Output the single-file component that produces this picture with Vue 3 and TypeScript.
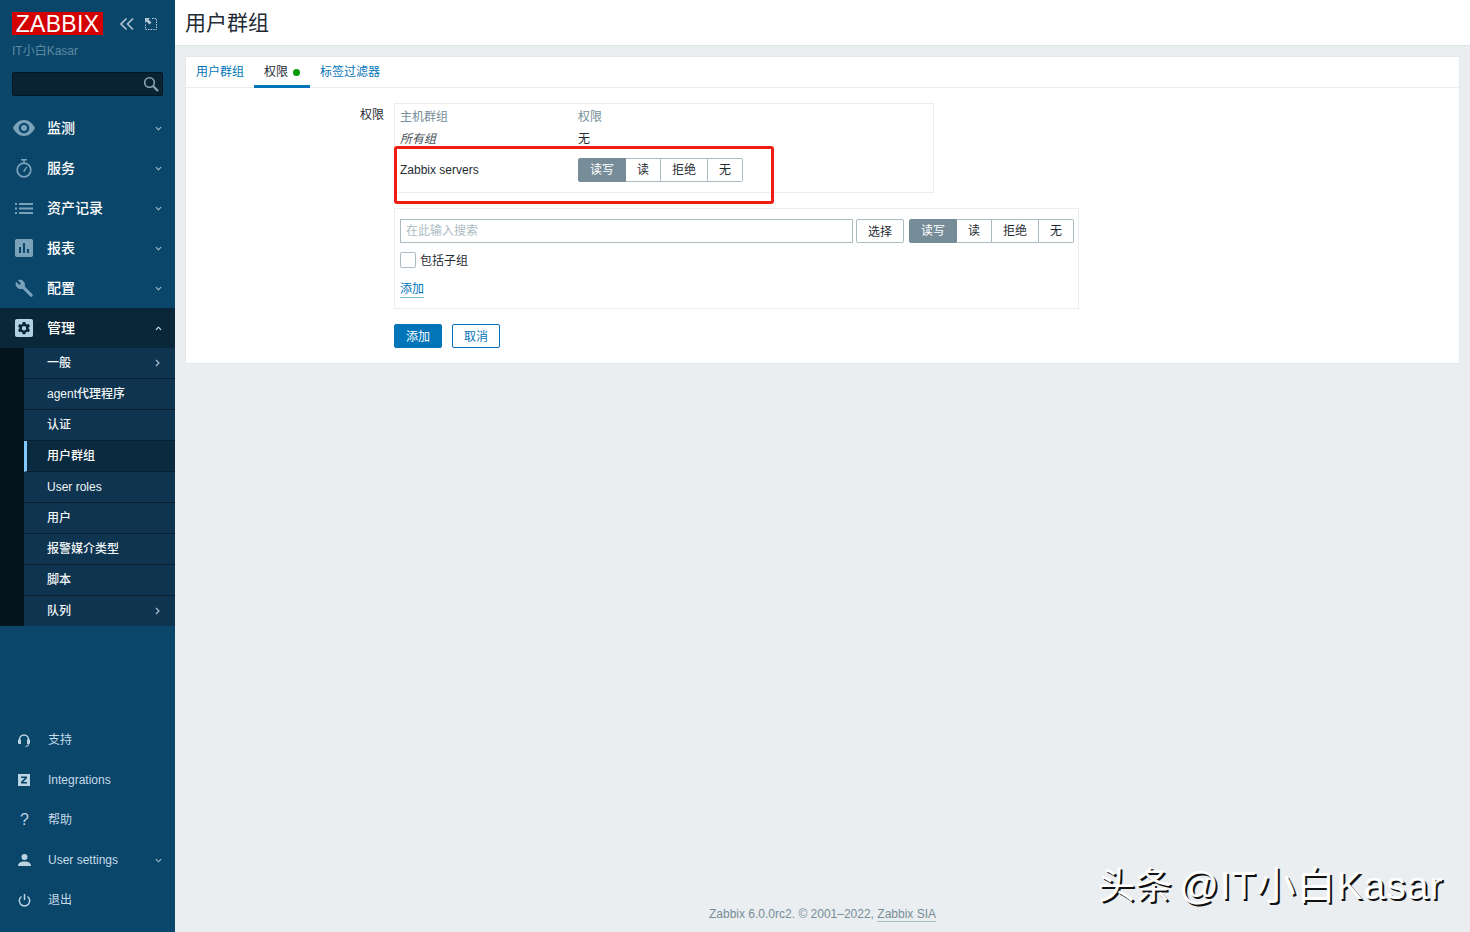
<script setup lang="ts">
interface NavItem { label: string; icon: string; open?: boolean }
const mainNav: NavItem[] = [
  { label: '监测', icon: 'eye' },
  { label: '服务', icon: 'timer' },
  { label: '资产记录', icon: 'list' },
  { label: '报表', icon: 'chart' },
  { label: '配置', icon: 'wrench' }
]
const subNav = [
  { label: '一般', arrow: true },
  { label: 'agent代理程序' },
  { label: '认证' },
  { label: '用户群组', active: true },
  { label: 'User roles' },
  { label: '用户' },
  { label: '报警媒介类型' },
  { label: '脚本' },
  { label: '队列', arrow: true }
]
const bottomNav = [
  { label: '支持', icon: 'headset' },
  { label: 'Integrations', icon: 'z' },
  { label: '帮助', icon: 'help' },
  { label: 'User settings', icon: 'user', more: true },
  { label: '退出', icon: 'power' }
]
const perms = [
  { label: '读写', w: 48, on: true },
  { label: '读', w: 35 },
  { label: '拒绝', w: 47 },
  { label: '无', w: 35 }
]
</script>

<template>
  <div class="page">
    <aside class="side">
      <div class="brand">
        <div class="logo">ZABBIX</div>
        <svg class="tool-collapse" width="16" height="14" viewBox="0 0 16 14"><path d="M7.5 1.5 2 7l5.5 5.5M14 1.5 8.5 7l5.5 5.500" fill="none" stroke="#b4c7d3" stroke-width="1.6"/></svg>
        <svg class="tool-kiosk" width="12" height="12" viewBox="0 0 12 12"><path d="M.5 6.500v5h11V.5H6.500" fill="none" stroke="#b4c7d3" stroke-dasharray="1.500 1"/><path d="M0 0h5L3.500 1.500 6.500 4.500 4.500 6.500 1.500 3.500 0 5z" fill="#b4c7d3"/></svg>
      </div>
      <div class="server">IT小白Kasar</div>
      <div class="search">
        <svg width="16" height="16" viewBox="0 0 16 16"><circle cx="6.500" cy="6.500" r="4.800" fill="none" stroke="#88a5b6" stroke-width="1.600"/><path d="m10 10 5 5" stroke="#88a5b6" stroke-width="2.200"/></svg>
      </div>

      <nav class="nav">
        <a v-for="n in mainNav" :key="n.label" class="nav-item">
          <span class="ico" :class="'ico-' + n.icon">
            <svg v-if="n.icon === 'eye'" width="22" height="16" viewBox="0 0 22 16"><path fill-rule="evenodd" d="M11 0c4.800 0 8.800 3.400 11 8-2.200 4.600-6.200 8-11 8S2.200 12.600 0 8c2.200-4.600 6.200-8 11-8zm0 2.700a5.300 5.300 0 1 0 0 10.600 5.300 5.300 0 0 0 0-10.600zm0 2.300a3 3 0 1 1 0 6 3 3 0 0 1 0-6z" fill="#7aa3bb"/></svg>
            <svg v-else-if="n.icon === 'timer'" width="16" height="19" viewBox="0 0 16 19"><path d="M5 .7h6M8 .7v3" stroke="#7aa3bb" stroke-width="1.600"/><circle cx="8" cy="11" r="6.800" fill="none" stroke="#7aa3bb" stroke-width="1.700"/><path d="M7 12l3.500-4.500.8.6L8.500 13z" fill="#7aa3bb"/></svg>
            <svg v-else-if="n.icon === 'list'" width="18" height="11" viewBox="0 0 18 11"><path d="M0 0h2v2H0zM4 0h14v2H4zM0 4.500h2v2H0zM4 4.500h14v2H4zM0 9h2v2H0zM4 9h14v2H4z" fill="#7aa3bb"/></svg>
            <svg v-else-if="n.icon === 'chart'" width="18" height="18" viewBox="0 0 18 18"><rect width="18" height="18" rx="2" fill="#7aa3bb"/><path d="M4 8h2v6H4zM8 4h2v10H8zM12 10h2v4h-2z" fill="#0a466a"/></svg>
            <svg v-else width="18" height="18" viewBox="0 0 18 18"><path d="M17.400 15.300 9.700 7.600c.6-1.800.2-3.900-1.300-5.400C6.800.6 4.500.3 2.700 1.100L6 4.400 4.400 6 1 2.700C.2 4.500.6 6.800 2.200 8.400c1.500 1.500 3.600 1.900 5.400 1.300l7.700 7.700c.6.600 1.500.6 2 0 .6-.6.600-1.500.1-2.100z" fill="#7aa3bb"/></svg>
          </span>
          <span class="nav-label">{{ n.label }}</span>
          <svg class="chev" width="7" height="5" viewBox="0 0 8 5"><path d="m1 1 3 3 3-3" fill="none" stroke="#a9c2d1" stroke-width="1.200"/></svg>
        </a>

        <a class="nav-item nav-open">
          <span class="ico">
            <svg width="18" height="18" viewBox="0 0 18 18"><rect width="18" height="18" rx="2" fill="#b2d0e4"/><path fill-rule="evenodd" d="m7.700 3 2.600 0 .4 1.800 1.300.7 1.700-.6 1.300 2.200-1.300 1.300v1.400l1.300 1.300-1.300 2.200-1.700-.6-1.300.7-.4 1.800H7.700l-.4-1.800-1.300-.7-1.700.6-1.300-2.200 1.300-1.300V8.600L3 7.300l1.300-2.200 1.700.6 1.300-.7zM9 7a2.200 2.200 0 1 0 0 4.400A2.200 2.200 0 0 0 9 7z" fill="#0a2739"/></svg>
          </span>
          <span class="nav-label">管理</span>
          <svg class="chev" width="7" height="5" viewBox="0 0 8 5"><path d="m1 4 3-3 3 3" fill="none" stroke="#e3edf3" stroke-width="1.200"/></svg>
        </a>

        <ul class="sub">
          <li v-for="s in subNav" :key="s.label" :class="{ active: s.active }">
            <span>{{ s.label }}</span>
            <svg v-if="s.arrow" class="chev-r" width="5" height="8" viewBox="0 0 5 8"><path d="m1 1 3 3-3 3" fill="none" stroke="#a9c2d1" stroke-width="1.200"/></svg>
          </li>
        </ul>
      </nav>

      <nav class="bottom">
        <a v-for="b in bottomNav" :key="b.label" class="bottom-item">
          <span class="bico">
            <svg v-if="b.icon === 'headset'" width="12" height="13" viewBox="0 0 12 13"><path d="M1.500 7V5.500a4.500 4.500 0 0 1 9 0V7" fill="none" stroke="#bcd3e2" stroke-width="1.500"/><path d="M0 5.500h3v4.500H1a1 1 0 0 1-1-1zM9 5.500h3V9a1 1 0 0 1-1 1H9zM10 10h1c0 1.800-1.500 3-3.500 3v-1c1.500 0 2.500-.8 2.500-2z" fill="#bcd3e2"/></svg>
            <svg v-else-if="b.icon === 'z'" width="12" height="12" viewBox="0 0 12 12"><rect width="12" height="12" fill="#bcd3e2"/><path d="M3 2.500h6v1.500L5.300 8H9v1.500H3V8l3.700-4H3z" fill="#0a466a"/></svg>
            <span v-else-if="b.icon === 'help'" class="qmark">?</span>
            <svg v-else-if="b.icon === 'user'" width="13" height="12" viewBox="0 0 13 12"><circle cx="6.500" cy="3" r="3" fill="#bcd3e2"/><path d="M0 12c0-3.200 2.800-4.500 6.500-4.500S13 8.800 13 12z" fill="#bcd3e2"/></svg>
            <svg v-else width="13" height="13" viewBox="0 0 13 13"><path d="M3.500 2.500a5.200 5.200 0 1 0 6 0M6.500 0v6" fill="none" stroke="#bcd3e2" stroke-width="1.500"/></svg>
          </span>
          <span class="bottom-label">{{ b.label }}</span>
          <svg v-if="b.more" class="chev" width="7" height="5" viewBox="0 0 8 5"><path d="m1 1 3 3 3-3" fill="none" stroke="#a9c2d1" stroke-width="1.200"/></svg>
        </a>
      </nav>
    </aside>

    <main class="main">
      <header class="head"><h1>用户群组</h1></header>
      <div class="content">
        <section class="card">
          <div class="tabs">
            <a class="tab">用户群组</a>
            <a class="tab tab-on">权限<i class="dot"></i></a>
            <a class="tab">标签过滤器</a>
          </div>
          <div class="form">
            <div class="row">
              <label class="lbl">权限</label>
              <div class="stack">
                <div class="perm-box">
                  <div class="grid-row hdr"><span>主机群组</span><span>权限</span></div>
                  <div class="grid-row all"><em>所有组</em><span>无</span></div>
                  <div class="grid-row srv">
                    <span>Zabbix servers</span>
                    <div class="seg">
                      <span v-for="p in perms" :key="p.label" :class="{ on: p.on }" :style="{ width: p.w + 'px' }">{{ p.label }}</span>
                    </div>
                  </div>
                </div>
                <div class="add-box">
                  <div class="add-line">
                    <div class="input">在此输入搜索</div>
                    <button class="btn-alt">选择</button>
                    <div class="seg">
                      <span v-for="p in perms" :key="p.label" :class="{ on: p.on }" :style="{ width: p.w + 'px' }">{{ p.label }}</span>
                    </div>
                  </div>
                  <div class="check"><i class="box"></i>包括子组</div>
                  <a class="link">添加</a>
                </div>
                <div class="actions">
                  <button class="btn-main">添加</button>
                  <button class="btn-line">取消</button>
                </div>
              </div>
            </div>
          </div>
        </section>
      </div>
      <footer class="foot">Zabbix 6.0.0rc2. © 2001–2022, <span class="foot-link">Zabbix SIA</span></footer>
    </main>

    <div class="redbox"></div>
    <div class="mark">头条 <span class="mark-latin">@IT小白Kasar</span></div>
  </div>
</template>

<style>
html, body { margin: 0; padding: 0; background: #ebeef0; }
</style>

<style scoped>
.page {
  position: relative;
  display: flex;
  width: 1470px;
  height: 932px;
  overflow: hidden;
  font-family: "Liberation Sans", "Noto Sans CJK SC", sans-serif;
  font-size: 12px;
  line-height: 14px;
  color: #1f2c33;
  background: #ebeef0;
}
.side {
  width: 175px;
  flex: none;
  display: flex;
  flex-direction: column;
  background: #0a466a;
  color: #fff;
}
.brand { display: flex; align-items: center; padding: 12px 0 0 12px; height: 23px; }
.logo {
  width: 91px;
  height: 23px;
  background: #d40000;
  color: #fff;
  font-size: 23px;
  line-height: 24px;
  letter-spacing: 0.300px;
  text-align: center;
}
.tool-collapse { margin-left: 16px; }
.tool-kiosk { margin-left: 10px; }
.server { padding: 8px 0 0 12px; height: 16px; line-height: 16px; color: #5f8aa3; font-size: 12px; }
.search {
  margin: 13px 12px 0;
  height: 24px;
  box-sizing: border-box;
  background: #0a2332;
  border: 1px solid #031722;
  border-radius: 2px;
  display: flex;
  align-items: center;
  justify-content: flex-end;
  padding-right: 3px;
}
.nav { margin-top: 12px; }
.nav-item { display: flex; align-items: center; height: 40px; }
.nav-open { background: #0a2739; }
.ico { width: 47px; flex: none; display: flex; box-sizing: border-box; padding-left: 15px; }
.ico-eye { padding-left: 13px; }
.ico-timer { padding-left: 16px; }
.nav-label { font-size: 14px; line-height: 16px; color: #fff; flex: 1; font-weight: 500; }
.chev { margin-right: 13px; }
.sub { list-style: none; margin: 0; padding: 0 0 0 24px; background: #03141d; }
.sub li {
  height: 31px;
  box-sizing: border-box;
  padding-left: 23px;
  padding-right: 15px;
  display: flex;
  align-items: center;
  justify-content: space-between;
  background: #0e3450;
  color: #f2f6f8;
  font-size: 12px;
  font-weight: 500;
  border-bottom: 1px solid #071e2e;
}
.sub li:last-child { border-bottom: 0; height: 30px; }
.sub li.active { background: #0a2a3f; color: #fff; border-left: 3px solid #80c8ff; padding-left: 20px; }
.bottom { margin-top: auto; padding-bottom: 12px; }
.bottom-item { display: flex; align-items: center; height: 40px; }
.bico { width: 48px; flex: none; padding-left: 18px; box-sizing: border-box; display: flex; align-items: center; }
.qmark { font-size: 16px; color: #bcd3e2; line-height: 16px; padding-left: 2px; }
.bottom-label { flex: 1; color: #c7dbe8; font-size: 12px; }

.main { flex: 1; min-width: 0; display: flex; flex-direction: column; }
.head {
  height: 45px;
  flex: none;
  background: #fff;
  border-bottom: 1px solid #dfe4e7;
  padding-left: 10px;
}
.head h1 { margin: 0; font-size: 21px; font-weight: 400; line-height: 45px; color: #1f2c33; }
.content { padding: 10px 10px 0; flex: 1; }
.card { background: #fff; border: 1px solid #e4e8ea; height: 306px; width: 1273px; }
.tabs { display: flex; height: 30px; border-bottom: 1px solid #ebeef0; }
.tab { padding: 0 10px 2px; color: #0275b8; display: flex; align-items: center; height: 31px; box-sizing: border-box; }
.tab-on { color: #1f2c33; border-bottom: 3px solid #0275b8; padding-top: 1px; padding-bottom: 0; width: 56px; }
.dot { width: 7px; height: 7px; border-radius: 50%; background: #009900; margin-left: 5px; margin-top: 1px; flex: none; }
.form { padding-top: 15px; }
.row { display: flex; }
.lbl { width: 198px; flex: none; text-align: right; padding-top: 5px; color: #1f2c33; }
.stack { margin-left: 10px; display: flex; flex-direction: column; align-items: flex-start; }
.perm-box { width: 540px; height: 90px; box-sizing: border-box; border: 1px solid #ebeef0; padding: 0 5px; }
.grid-row { display: grid; grid-template-columns: 178px 1fr; align-items: center; }
.hdr { height: 24px; color: #768d99; padding-top: 2px; box-sizing: border-box; }
.all { height: 21px; color: #1f2c33; }
.all em { font-style: italic; color: #444f55; }
.srv { height: 43px; padding-bottom: 1px; box-sizing: border-box; }
.seg { display: flex; flex: none; height: 24px; }
.seg span {
  box-sizing: border-box;
  border: 1px solid #acbbc2;
  border-left-width: 0;
  display: flex;
  align-items: center;
  justify-content: center;
  color: #1f2c33;
  background: #fff;
}
.seg span:first-child { border-left-width: 1px; border-radius: 2px 0 0 2px; }
.seg span:last-child { border-radius: 0 2px 2px 0; }
.seg span.on { background: #768d99; border-color: #768d99; color: #fff; }
.add-box { width: 685px; height: 101px; box-sizing: border-box; margin-top: 15px; border: 1px solid #ebeef0; padding: 10px 4px 0 5px; }
.add-line { display: flex; align-items: center; }
.input {
  width: 453px;
  flex: none;
  height: 24px;
  box-sizing: border-box;
  border: 1px solid #acbbc2;
  padding-left: 5px;
  line-height: 22px;
  color: #acbbc2;
}
.btn-alt {
  width: 48px;
  flex: none;
  height: 24px;
  margin: 0 5px 0 3px;
  padding: 2px 0 0;
  font: inherit;
  color: #1f2c33;
  background: #fff;
  border: 1px solid #acbbc2;
  border-radius: 2px;
}
.check { display: flex; align-items: flex-start; margin-top: 9px; height: 16px; line-height: 18px; color: #1f2c33; }
.box { width: 16px; height: 16px; box-sizing: border-box; border: 1px solid #acbbc2; border-radius: 2px; margin-right: 4px; }
.link {
  display: inline-block;
  margin-top: 13px;
  height: 16px;
  line-height: 16px;
  color: #0275b8;
  border-bottom: 1px solid #7fbadb;
}
.actions { display: flex; gap: 10px; margin-top: 15px; }
.btn-main, .btn-line { width: 48px; height: 24px; padding: 2px 0 0; font: inherit; border-radius: 2px; box-sizing: border-box; }
.btn-main { background: #0275b8; color: #fff; border: 1px solid #0275b8; }
.btn-line { background: #fff; color: #0275b8; border: 1px solid #0275b8; }
.foot { text-align: center; color: #768d99; height: 26px; line-height: 16px; flex: none; }
.foot-link { border-bottom: 1px solid #acbbc2; }
.redbox {
  position: absolute;
  left: 394px;
  top: 146px;
  width: 380px;
  height: 58px;
  box-sizing: border-box;
  border: 3px solid #f01c14;
  border-radius: 3px;
  pointer-events: none;
}
.mark {
  position: absolute;
  left: 1098px;
  top: 863px;
  font-size: 37px;
  line-height: 46px;
  white-space: nowrap;
  color: #fff;
  text-shadow: 2px 2px 0 #111;
}
.mark-latin { font-size: 39px; letter-spacing: 1px; margin-left: -3px; }
</style>
